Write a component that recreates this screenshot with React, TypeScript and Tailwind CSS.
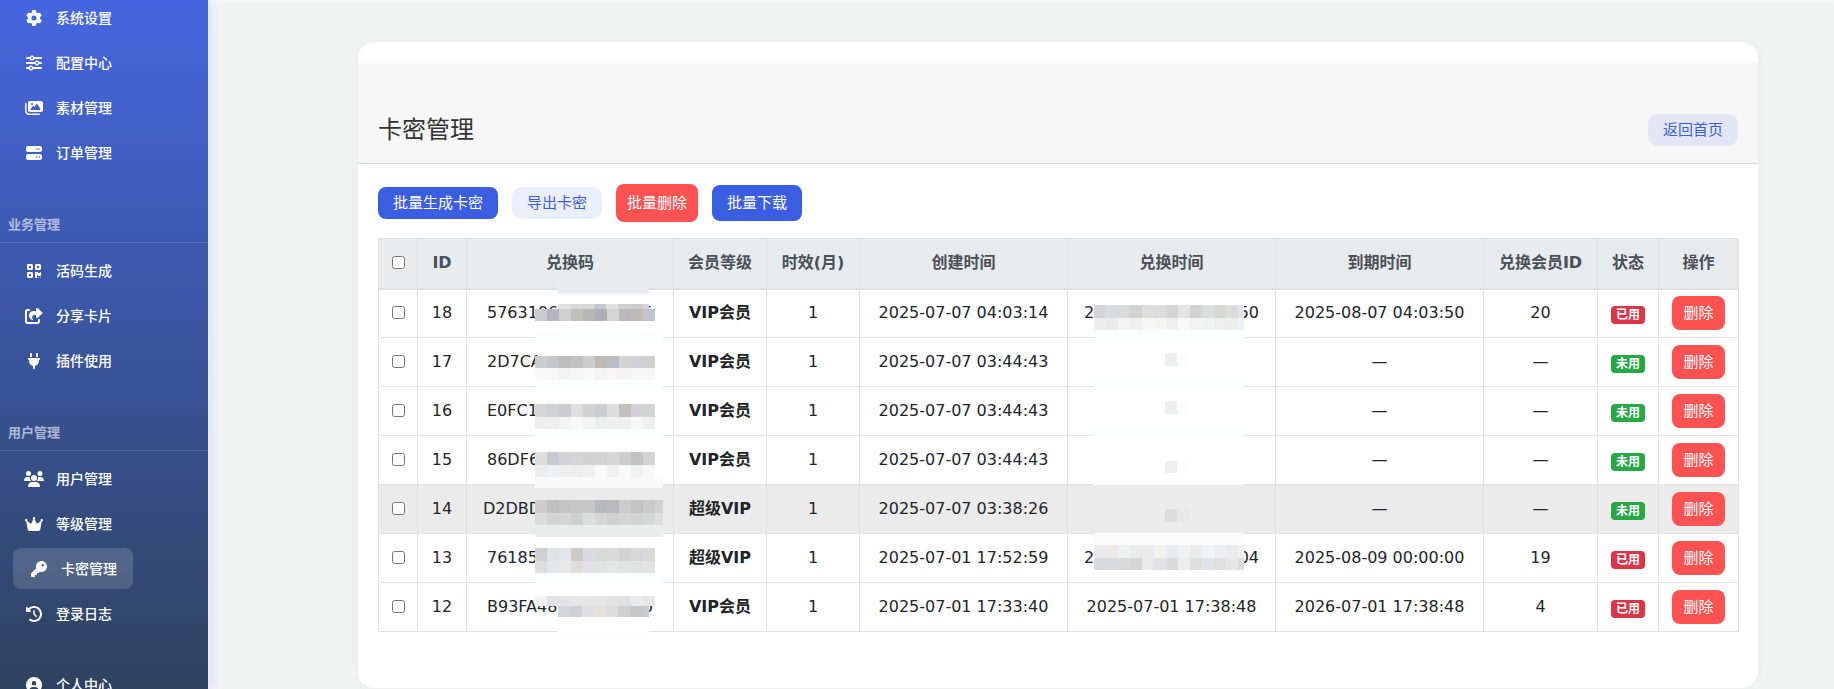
import type { IconType } from 'react-icons'
import {
  FaGear, FaSliders, FaImages, FaServer, FaQrcode, FaShareFromSquare,
  FaPlug, FaUsers, FaCrown, FaKey, FaClockRotateLeft, FaCircleUser,
} from 'react-icons/fa6'

type NavItem = { icon: IconType; label: string; size?: number; active?: boolean }
type NavGroup = { title?: string; items: NavItem[] }

const groups: NavGroup[] = [
  {
    items: [
      { icon: FaGear, label: '系统设置' },
      { icon: FaSliders, label: '配置中心' },
      { icon: FaImages, label: '素材管理', size: 18 },
      { icon: FaServer, label: '订单管理' },
    ],
  },
  {
    title: '业务管理',
    items: [
      { icon: FaQrcode, label: '活码生成' },
      { icon: FaShareFromSquare, label: '分享卡片', size: 18 },
      { icon: FaPlug, label: '插件使用' },
    ],
  },
  {
    title: '用户管理',
    items: [
      { icon: FaUsers, label: '用户管理', size: 20 },
      { icon: FaCrown, label: '等级管理', size: 18 },
      { icon: FaKey, label: '卡密管理', active: true },
      { icon: FaClockRotateLeft, label: '登录日志' },
    ],
  },
]

// One strip of mosaic blocks, measured from the top left of its cell
type Strip = { x: number; y: number; w: number; h: number; c: string[] }

type Row = {
  id: number
  code: string
  codeEnd?: string
  level: string
  created: string
  redeemed: string[]
  expires: string
  member: string
  used: boolean
  codeMask: Strip[]
  timeMask: Strip[]
}

const rows: Row[] = [
  {
    id: 18, code: '5763196', codeEnd: '5', level: 'VIP会员', created: '2025-07-07 04:03:14', redeemed: ['2', '50'],
    expires: '2025-08-07 04:03:50', member: '20', used: true,
    codeMask: [
      { x: 92, y: -7, w: 91, h: 12, c: ['#e9edf0'] },
      { x: 92, y: 15, w: 91, h: 5, c: ['#dfe0e0', '#d9d9d9', '#d9d9d9', '#c6c7cc', '#dfe0df', '#cfcfcf', '#cdcdce', '#d6d6d6'] },
      { x: 69, y: 20, w: 120, h: 12, c: ['#c9cccf', '#b5b5bb', '#cfd0cf', '#c2bfbb', '#b7b7b8', '#adadb2', '#d3d4d3', '#b7b9bd', '#bfbab6', '#c0c4cc'] },
      { x: 69, y: 43, w: 128, h: 12, c: ['#fcfefd'] },
    ],
    timeMask: [
      { x: 27, y: 16, w: 150, h: 13, c: ['#d5d6d7', '#d8dadc', '#d8dadb', '#d2d2d1', '#dedede', '#dcdcdc', '#d6d3d3', '#e3e4e8', '#d2d2d1', '#dbdcdc', '#d6d8d6', '#dcdcdc', '#e3e3e3'] },
      { x: 27, y: 29, w: 150, h: 12, c: ['#eeedee', '#eaeaeb', '#f2f3f5', '#f0f0f0', '#f6f6f5', '#f5f5f4', '#efeff2', '#fbf9f8', '#f3f3f5', '#f1f2f2', '#eeeeee', '#ededee', '#f0f1f4'] },
      { x: 27, y: 41, w: 150, h: 12, c: ['#fcfefd'] },
    ],
  },
  {
    id: 17, code: '2D7CA', level: 'VIP会员', created: '2025-07-07 03:44:43', redeemed: [],
    expires: '—', member: '—', used: false,
    codeMask: [
      { x: 69, y: 19, w: 120, h: 12, c: ['#cbcdce', '#c6c7c8', '#bcbdbc', '#bec2c5', '#cdcdce', '#bfbab8', '#b9bdc6', '#d4d4d5', '#cfcfd6', '#cfcfd0'] },
      { x: 69, y: 31, w: 120, h: 12, c: ['#f9f9f9', '#f8f8f8', '#f2f4f4', '#f5f5f5', '#f9f9f9', '#f4f4f4', '#f8f6f5', '#f5f5f5', '#f6f6f6', '#f6f6f6'] },
      { x: 69, y: 44, w: 128, h: 12, c: ['#fcfefd'] },
    ],
    timeMask: [
      { x: 98, y: 16, w: 24, h: 13, c: ['#eeeeee', '#fbfdfc'] },
      { x: 27, y: 41, w: 150, h: 11, c: ['#fcfefd'] },
    ],
  },
  {
    id: 16, code: 'E0FC1', level: 'VIP会员', created: '2025-07-07 03:44:43', redeemed: [],
    expires: '—', member: '—', used: false,
    codeMask: [
      { x: 69, y: 18, w: 120, h: 13, c: ['#d6d6d8', '#cfd0d1', '#c8ccd0', '#dedede', '#d1d1d2', '#cbcccd', '#dddddc', '#c2bfbb', '#d0d2d8', '#d2d3d4'] },
      { x: 69, y: 31, w: 120, h: 12, c: ['#ebeceb', '#eeeeee', '#f2f4f3', '#f9f9f9', '#f4f4f4', '#eceeed', '#efefef', '#eeefee', '#f6f8f7', '#f0f0f0'] },
      { x: 69, y: 43, w: 128, h: 12, c: ['#fcfefd'] },
    ],
    timeMask: [
      { x: 98, y: 15, w: 24, h: 13, c: ['#eeeeee', '#fbfdfc'] },
      { x: 27, y: 40, w: 150, h: 12, c: ['#fcfefd'] },
    ],
  },
  {
    id: 15, code: '86DF6', level: 'VIP会员', created: '2025-07-07 03:44:43', redeemed: [],
    expires: '—', member: '—', used: false,
    codeMask: [
      { x: 69, y: 17, w: 120, h: 13, c: ['#dcdddd', '#c8c9ce', '#d3d3d6', '#d3d4d4', '#d2d2d2', '#d3d3d3', '#d6d6d5', '#cdcdce', '#c2c3c4', '#d3d3d4'] },
      { x: 69, y: 30, w: 120, h: 12, c: ['#ecedf0', '#f0f1f2', '#eeeeee', '#ededed', '#f1f1f1', '#f9f9f9', '#f0f0f0', '#f9fafd', '#f1f2f2', '#f8f8f8'] },
      { x: 69, y: 42, w: 128, h: 11, c: ['#f9f9f9'] },
    ],
    timeMask: [
      { x: 98, y: 26, w: 24, h: 12, c: ['#eeeeee', '#fbfdfc'] },
      { x: 27, y: 47, w: 150, h: 3, c: ['#ffffff'] },
    ],
  },
  {
    id: 14, code: 'D2DBD', level: '超级VIP', created: '2025-07-07 03:38:26', redeemed: [],
    expires: '—', member: '—', used: false,
    codeMask: [
      { x: 69, y: 16, w: 128, h: 13, c: ['#cdcdcd', '#c1c1c1', '#c5c5c5', '#c7c7c8', '#c6c7c9', '#b6b8bc', '#b7babf', '#cccccc', '#c4c4c5', '#cacaca', '#d0d3d3'] },
      { x: 69, y: 29, w: 128, h: 12, c: ['#dadcdb', '#d3d3d3', '#d5d5d5', '#cecfcf', '#dcdde0', '#d6d6d7', '#d1d1d1', '#d5d5d5', '#d3d3d3', '#d5d6d6', '#dcdfde'] },
      { x: 69, y: 41, w: 128, h: 12, c: ['#ebedec'] },
    ],
    timeMask: [
      { x: 27, y: 2, w: 150, h: 12, c: ['#eaeaea'] },
      { x: 98, y: 25, w: 24, h: 13, c: ['#dcdcdc', '#e8e8e8'] },
    ],
  },
  {
    id: 13, code: '76185', level: '超级VIP', created: '2025-07-01 17:52:59', redeemed: ['2', '04'],
    expires: '2025-08-09 00:00:00', member: '19', used: true,
    codeMask: [
      { x: 69, y: 15, w: 120, h: 13, c: ['#cfcfd1', '#e0e2e5', '#e3e4e5', '#cfc9c5', '#dadbe1', '#d8dada', '#d9dada', '#d2d2d3', '#d6d7db', '#d9d9d8'] },
      { x: 69, y: 28, w: 120, h: 12, c: ['#dedddd', '#e4e5e9', '#e8e8e9', '#e0dcd8', '#e0e2e8', '#e1e3e2', '#e4e5e5', '#e2e3e3', '#e0e2e2', '#e2e3e2'] },
      { x: 69, y: 40, w: 128, h: 12, c: ['#fcfefe'] },
    ],
    timeMask: [
      { x: 27, y: 0, w: 150, h: 12, c: ['#fbfbfb'] },
      { x: 27, y: 12, w: 150, h: 13, c: ['#ecebeb', '#ecebea', '#f0f1f4', '#ebebec', '#ebebeb', '#f3f3f0', '#eaebec', '#f0f1f3', '#ebebec', '#f2f3f6', '#edeeef', '#ebebeb', '#f0f0f2'] },
      { x: 27, y: 25, w: 150, h: 12, c: ['#d9dadd', '#d9dbdc', '#dadada', '#d6d6d5', '#e9eaec', '#e2e2e2', '#dadbdf', '#ececed', '#dedfdf', '#e1e3e6', '#e0e0e1', '#e8e6e6', '#dbdde3'] },
    ],
  },
  {
    id: 12, code: 'B93FA48', codeEnd: '6', level: 'VIP会员', created: '2025-07-01 17:33:40', redeemed: ['2025-07-01 17:38:48'],
    expires: '2026-07-01 17:38:48', member: '4', used: true,
    codeMask: [
      { x: 69, y: 14, w: 120, h: 10, c: ['#f0f1f0', '#e2e3e2', '#e2e5e5', '#e6e6e6', '#e6e6e6', '#e5e5e5', '#e2e2e2', '#dfe0e5', '#e9eaea', '#e5e5e6'] },
      { x: 92, y: 24, w: 91, h: 11, c: ['#d5d6d8', '#d0d0d2', '#dedfde', '#e2e1de', '#dcdcdd', '#cfcfd0', '#c7c8c9', '#c9cacc'] },
      { x: 92, y: 48, w: 91, h: 9, c: ['#fdfdfd'] },
    ],
    timeMask: [],
  },
]

const headers = ['ID', '兑换码', '会员等级', '时效(月)', '创建时间', '兑换时间', '到期时间', '兑换会员ID', '状态', '操作']

function Mosaic({ strips }: { strips: Strip[] }) {
  return (
    <svg className="absolute -top-px -left-px overflow-visible pointer-events-none" width="1" height="1" shapeRendering="crispEdges" aria-hidden="true">
      {strips.map((s) =>
        s.c.map((fill, i) => {
          const step = s.c.length === 1 ? s.w : 12
          return (
            <rect key={`${s.y}-${i}`} x={s.x + i * step} y={s.y} width={Math.min(step, s.w - i * step)} height={s.h} fill={fill} />
          )
        }),
      )}
    </svg>
  )
}

function NavLink({ icon: Icon, label, size = 16, active }: NavItem) {
  return (
    <a
      href="#"
      className={`flex items-center gap-3 w-fit h-[41px] px-4 mb-1 rounded-lg text-sm font-medium text-white ${active ? 'ml-[13px] bg-white/15' : 'ml-2'}`}
    >
      <span className="w-5 flex justify-center shrink-0"><Icon size={size} /></span>
      {label}
    </a>
  )
}

function Sidebar() {
  return (
    <aside className="w-52 shrink-0 overflow-hidden bg-linear-to-b from-[#4666e0] to-[#2f425f] shadow-[4px_0_10px_rgba(67,97,238,0.12)]">
      <nav className="-mt-[3px]">
        {groups.map((g, i) => (
          <div key={i}>
            {g.title && (
              <h2 className="pt-[38px] pb-[7px] pl-2 mb-[7px] border-b border-white/15 text-[13px] leading-5 font-bold text-white/60">{g.title}</h2>
            )}
            {g.items.map((item) => <NavLink key={item.label} {...item} />)}
          </div>
        ))}
        <div className="pt-[26px]">
          <NavLink icon={FaCircleUser} label="个人中心" />
        </div>
      </nav>
    </aside>
  )
}

function CardTable() {
  return (
    <table className="w-full table-fixed border-collapse text-center text-base leading-6 text-[#212529]">
      <colgroup>
        <col className="w-[39px]" />
        <col className="w-[49px]" />
        <col className="w-[207px]" />
        <col className="w-[93px]" />
        <col className="w-[93px]" />
        <col className="w-[208px]" />
        <col className="w-[208px]" />
        <col className="w-[208px]" />
        <col className="w-[114px]" />
        <col className="w-[61px]" />
        <col className="w-[80px]" />
      </colgroup>
      <thead>
        <tr className="h-[50px] bg-[#e8ebee] text-[#495057]">
          <th className="border border-b-2 border-[#dee2e6] pb-0.5">
            <input type="checkbox" aria-label="全选" className="block mx-auto" />
          </th>
          {headers.map((h) => (
            <th key={h} className="border border-b-2 border-[#dee2e6] font-bold whitespace-nowrap">{h}</th>
          ))}
        </tr>
      </thead>
      <tbody>
        {rows.map((r) => (
          <tr key={r.id} className={`h-[49px] ${r.id === 14 ? 'bg-[#ebebeb]' : ''}`}>
            <td className="border border-[#dee2e6] pb-0.5">
              <input type="checkbox" aria-label={`选择 ${r.id}`} className="block mx-auto" />
            </td>
            <td className="border border-[#dee2e6]">{r.id}</td>
            <td className={`relative border border-[#dee2e6] pr-5 ${r.id === 14 ? 'pl-4' : 'pl-5'}`}>
              <div className="flex justify-between">
                <span>{r.code}</span>
                {r.codeEnd && <span>{r.codeEnd}</span>}
              </div>
              <Mosaic strips={r.codeMask} />
            </td>
            <td className="border border-[#dee2e6] font-bold">{r.level}</td>
            <td className="border border-[#dee2e6]">1</td>
            <td className="border border-[#dee2e6] whitespace-nowrap">{r.created}</td>
            <td className="relative border border-[#dee2e6] px-4 whitespace-nowrap">
              <div className={`flex ${r.redeemed.length > 1 ? 'justify-between' : 'justify-center'}`}>
                {r.redeemed.map((t) => <span key={t}>{t}</span>)}
              </div>
              <Mosaic strips={r.timeMask} />
            </td>
            <td className="border border-[#dee2e6] whitespace-nowrap">{r.expires}</td>
            <td className="border border-[#dee2e6]">{r.member}</td>
            <td className="border border-[#dee2e6] pt-1">
              <span className={`block w-fit mx-auto px-[5px] rounded text-xs leading-[18px] font-bold text-white ${r.used ? 'bg-[#dc3545]' : 'bg-[#28a745]'}`}>
                {r.used ? '已用' : '未用'}
              </span>
            </td>
            <td className="border border-[#dee2e6]">
              <button type="button" className="block mx-auto px-[11px] h-[34px] rounded-lg bg-[#fc5252] text-[15px] text-white">删除</button>
            </td>
          </tr>
        ))}
      </tbody>
    </table>
  )
}

export default function App() {
  return (
    <div className="flex h-screen overflow-hidden bg-[#f1f3f3] font-['DejaVu_Sans','Noto_Sans_CJK_SC',sans-serif]">
      <Sidebar />
      <main className="flex-1 min-w-0 pt-[42px] pl-[90px] pr-4 shadow-[inset_0_4px_4px_-2px_rgba(255,255,255,0.35)]">
        <section className="max-w-[1400px] mx-auto pt-5 pb-14 rounded-2xl bg-white shadow-[0_0_8px_rgba(0,0,0,0.04)]">
          <header className="flex items-end justify-between h-[102px] px-5 pb-[17px] rounded-t border-b border-[#dadbdc] bg-[#f7f7f7]">
            <h1 className="text-2xl leading-8 text-[#333]">卡密管理</h1>
            <a href="#" className="px-[15px] rounded-[10px] bg-[#e3e7f5] text-[15px] leading-8 text-[#3b5de0]">返回首页</a>
          </header>
          <div className="px-5 pt-5">
            <div className="flex items-center gap-[14px] mb-4 text-[15px] text-white">
              <button type="button" className="h-8 px-[15px] rounded-lg bg-[#3b5de0]">批量生成卡密</button>
              <button type="button" className="h-8 px-[15px] rounded-[10px] bg-[#ebeefb] text-[#3b5de0]">导出卡密</button>
              <button type="button" className="h-[38px] px-[11px] rounded-lg bg-[#fc5252]">批量删除</button>
              <button type="button" className="h-9 px-[15px] rounded-lg bg-[#3b5de0]">批量下载</button>
            </div>
            <CardTable />
          </div>
        </section>
      </main>
    </div>
  )
}
